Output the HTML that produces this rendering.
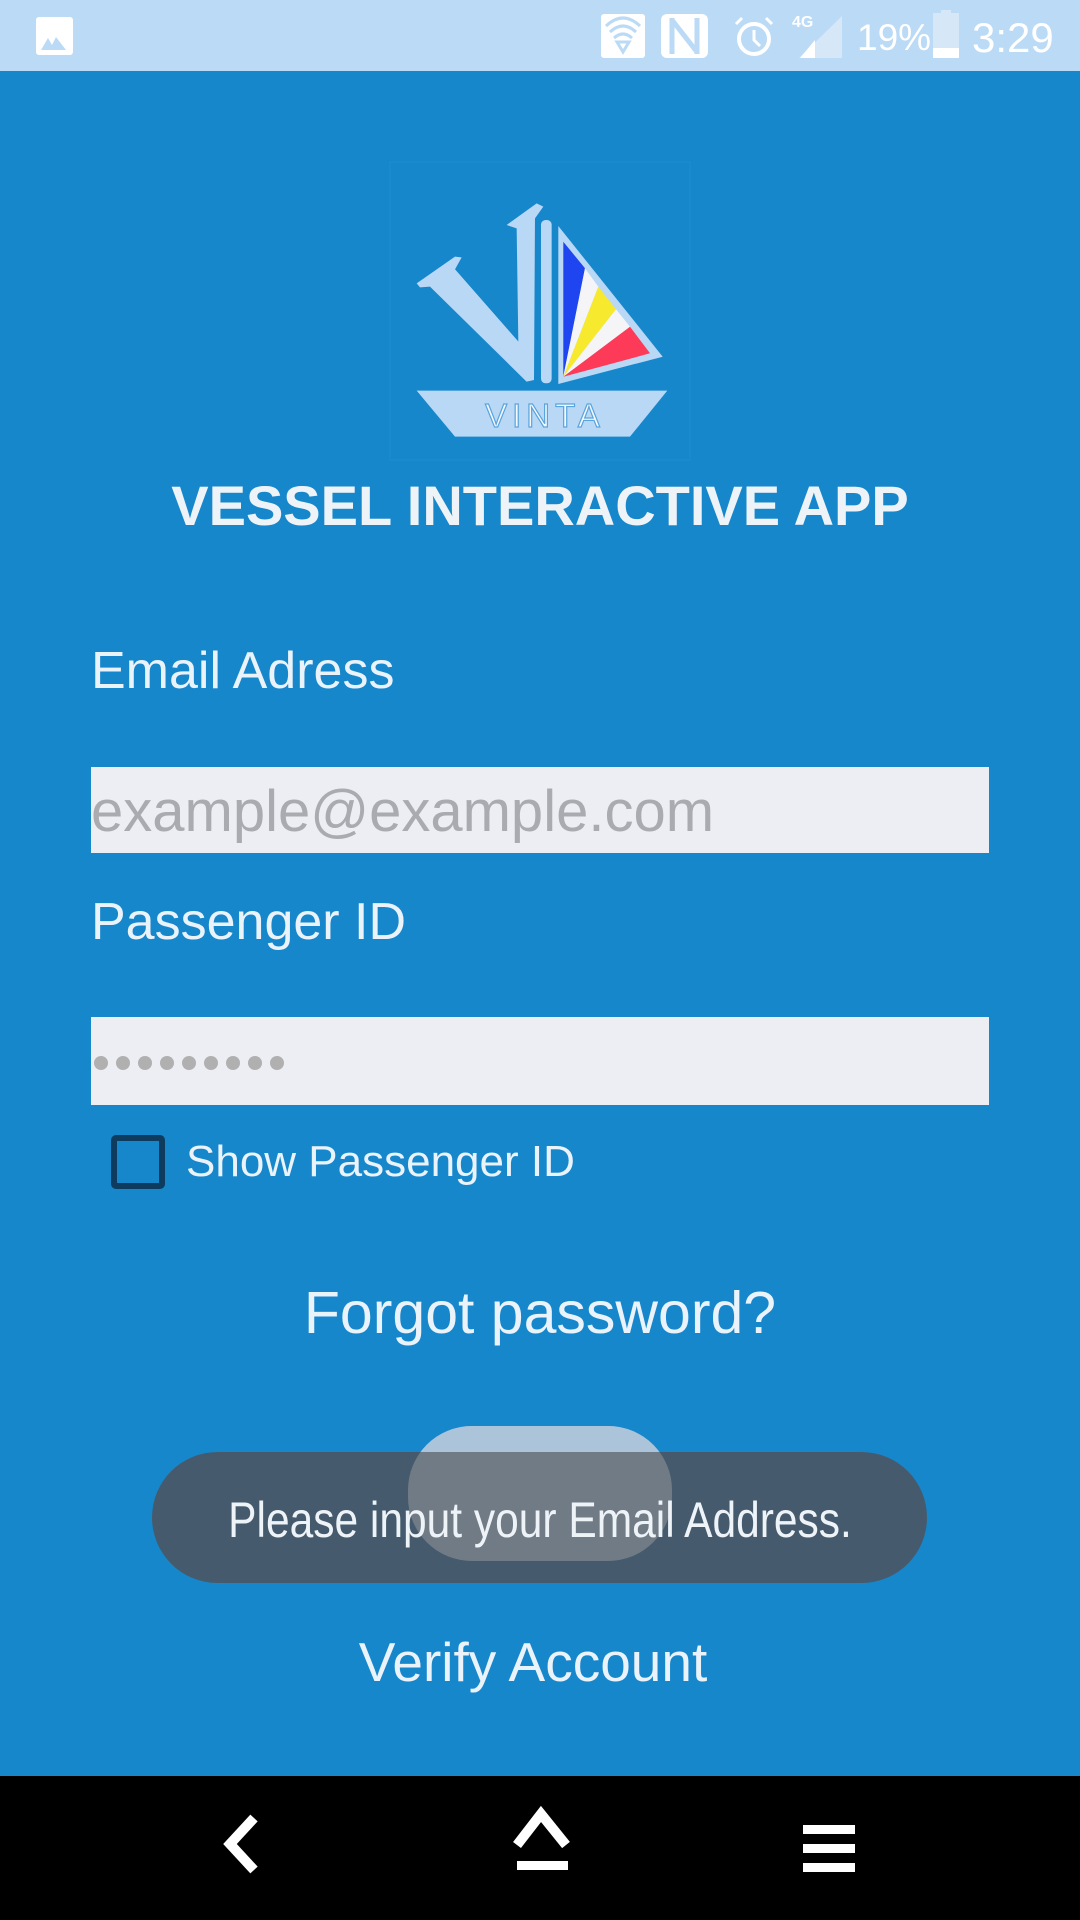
<!DOCTYPE html>
<html><head><meta charset="utf-8"><style>
*{margin:0;padding:0;box-sizing:border-box}
body{width:1080px;height:1920px;background:#1787cc;position:relative;overflow:hidden;font-family:"Liberation Sans",sans-serif;color:#eaf2fa}
.a{position:absolute}
.sb{left:0;top:0;width:1080px;height:71px;background:#bbdaf6}
.nav{left:0;top:1776px;width:1080px;height:144px;background:#000}
.lbl{font-size:52px;left:91px}
.inp{left:91px;width:898px;background:#edeef3}
</style></head><body>
<div class="a sb"></div>
<svg class="a" style="left:0;top:0" width="1080" height="71">
<rect x="36" y="17" width="37" height="38" rx="3" fill="#fff"/>
<path d="M41 50 L48 38 L52 45 L56 37 L66 50Z" fill="#bbdaf6"/>
<rect x="601" y="14" width="44" height="44" rx="3" fill="#fff"/>
<path d="M606 26 Q623 10 640 26 M610 32 Q623 20 636 32 M614 38 Q623 30 632 38 M623 52 L617 42 L629 42Z" stroke="#bbdaf6" stroke-width="3" fill="none"/>
<rect x="661" y="14" width="47" height="44" rx="6" fill="#fff"/>
<path d="M672 18 V54 M697 18 V54 M672 20 L697 52" stroke="#bbdaf6" stroke-width="5" fill="none"/>
<circle cx="754" cy="39" r="15" fill="none" stroke="#fff" stroke-width="4"/>
<path d="M754 30 V40 L760 46 M736 24 L742 18 M772 24 L766 18" stroke="#fff" stroke-width="3" fill="none"/>
<text x="792" y="27" font-size="16" font-weight="bold" fill="#fff" font-family="Liberation Sans">4G</text>
<path d="M842 16 V58 H799Z" fill="#d6e8f8"/>
<path d="M815 58 V40 L800 58Z" fill="#fff"/>
<text x="857" y="50" font-size="37" fill="#fff" font-family="Liberation Sans">19%</text>
<rect x="933" y="13" width="26" height="45" fill="#d6e8f8"/>
<rect x="941" y="10" width="10" height="4" fill="#d6e8f8"/>
<rect x="933" y="48" width="26" height="10" fill="#fff"/>
<text x="972" y="52" font-size="42" fill="#fff" font-family="Liberation Sans">3:29</text>
</svg>

<svg class="a" style="left:380px;top:150px" width="320" height="320" viewBox="0 0 320 320">
<rect x="10" y="12" width="300" height="298" fill="none" stroke="#1f8bd0" stroke-width="1"/>
<g transform="scale(0.3333)" fill="#b9d8f5">
<path d="M110,400 L225,320 L245,322 L225,358 L415,575 L410,235 L380,225 L470,160 L490,170 L465,205 L462,690 L440,695 L150,410 L120,412 Z"/>
<path d="M150,405 L225,358 L415,575 L440,695Z"/>
<rect x="483" y="210" width="32" height="490" rx="14"/>
<path d="M110,722 L862,722 L750,860 L225,860Z"/>
</g>
<path d="M178.3,76 L282.7,206.7 L178.3,234Z" fill="#b9d8f5"/>
<path d="M183.3,226.7 L183.3,91.7 L205,118.3Z" fill="#1f45f0"/>
<path d="M183.3,226.7 L205,118.3 L218.3,136.7Z" fill="#f5f5f8"/>
<path d="M183.3,226.7 L218.3,136.7 L236,159.3Z" fill="#f7e92e"/>
<path d="M183.3,226.7 L236,159.3 L250,176.7Z" fill="#f5f5f8"/>
<path d="M183.3,226.7 L250,176.7 L270,203.3Z" fill="#fd3a58"/>
<text x="165" y="277" text-anchor="middle" font-size="33" letter-spacing="5" fill="#f4f9fe" stroke="#5aa4dc" stroke-width="1.2" font-family="Liberation Sans">VINTA</text>
</svg>

<div class="a" style="left:0;width:1080px;top:473px;text-align:center;font-size:56px;font-weight:bold;color:#eef3f8">VESSEL INTERACTIVE APP</div>

<div class="a lbl" style="top:641px">Email Adress</div>
<div class="a inp" style="top:767px;height:86px"></div>
<div class="a" style="left:91px;top:778px;font-size:58px;color:#a9abb0">example@example.com</div>

<div class="a lbl" style="top:892px">Passenger ID</div>
<div class="a inp" style="top:1017px;height:88px"></div>
<svg class="a" style="left:0;top:1050px" width="300" height="26">
<g fill="#b0b0b0"><circle cx="101" cy="13" r="7"/><circle cx="123" cy="13" r="7"/><circle cx="145" cy="13" r="7"/><circle cx="167" cy="13" r="7"/><circle cx="189" cy="13" r="7"/><circle cx="211" cy="13" r="7"/><circle cx="233" cy="13" r="7"/><circle cx="255" cy="13" r="7"/><circle cx="277" cy="13" r="7"/></g>
</svg>

<div class="a" style="left:111px;top:1135px;width:54px;height:54px;border:6px solid #0d3c5f;border-radius:5px"></div>
<div class="a" style="left:186px;top:1137px;font-size:44px">Show Passenger ID</div>

<div class="a" style="left:0;width:1080px;top:1279px;text-align:center;font-size:59px">Forgot password?</div>

<div class="a" style="left:408px;top:1426px;width:264px;height:135px;border-radius:64px;background:#b9d8f5"></div>
<div class="a" style="left:152px;top:1452px;width:775px;height:131px;border-radius:66px;background:rgba(78,84,92,0.85)"></div>
<div class="a" style="left:408px;top:1426px;width:264px;height:135px;border-radius:64px;background:rgba(150,160,170,0.35)"></div>
<div class="a" style="left:0;width:1080px;top:1491px;text-align:center;font-size:50px;color:#eef3f8;transform:scaleX(0.85)">Please input your Email Address.</div>

<div class="a" style="left:0;width:1066px;top:1630px;text-align:center;font-size:55px">Verify Account</div>

<div class="a nav"></div>
<svg class="a" style="left:0;top:1776px" width="1080" height="144">
<path d="M254 42 L230 68 L254 94" stroke="#fff" stroke-width="10" fill="none" stroke-linecap="butt"/>
<path d="M517 69 L541 38 L566 69" stroke="#fff" stroke-width="10" fill="none"/>
<rect x="517" y="85" width="51" height="9" fill="#fff"/>
<rect x="803" y="49" width="52" height="9" fill="#fff"/>
<rect x="803" y="68" width="52" height="9" fill="#fff"/>
<rect x="803" y="87" width="52" height="9" fill="#fff"/>
</svg>
</body></html>
